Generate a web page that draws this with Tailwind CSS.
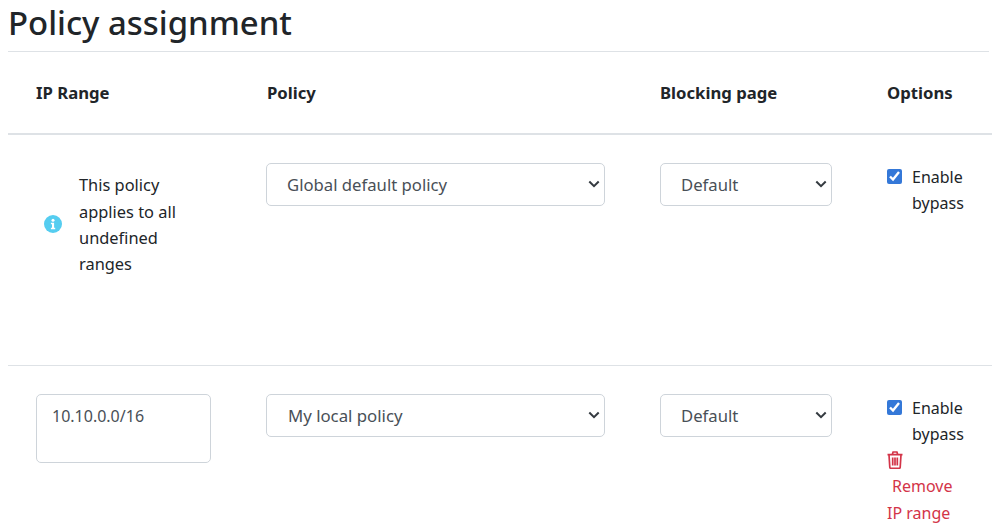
<!DOCTYPE html>
<html>
<head>
<meta charset="utf-8">
<script src="https://cdn.jsdelivr.net/npm/@tailwindcss/browser@4"></script>
</head>
<body class="bg-white text-[#212529] font-['Noto_Sans',sans-serif] text-[16px] h-[531px] overflow-hidden">
<div class="px-2">
  <h1 class="h-[51px] pt-px text-[32.9px] leading-[43px] font-medium">Policy assignment</h1>
  <div class="border-t border-[#dee2e6] grid grid-cols-[230px_394px_227px_133px]">
    <div class="col-span-4 grid grid-cols-subgrid border-b-2 border-[#dee2e6] h-[83px] pt-[29px] font-bold text-[16.7px] leading-6">
      <div class="pl-[28px]">IP Range</div>
      <div class="pl-[29px]">Policy</div>
      <div class="pl-[28px]">Blocking page</div>
      <div class="pl-[28px]">Options</div>
    </div>

    <div class="col-span-4 grid grid-cols-subgrid border-b border-[#dee2e6] h-[231px] pt-[28px]">
      <div class="pl-[36px] flex items-start">
        <div class="flex items-center gap-[17px] h-[122px]">
          <svg class="w-[18px] h-[18px] shrink-0" viewBox="0 0 18 18"><circle cx="9" cy="9" r="9" fill="#55cdf0"/><circle cx="9" cy="5.2" r="1.5" fill="#fff"/><path d="M6.9 7.7h3.2v5h1.1v1.5H6.9v-1.5H8v-3.5H6.9z" fill="#fff"/></svg>
          <div class="w-[110px] leading-[26.4px] text-[16.4px] pt-[2px]">This policy applies to all undefined ranges</div>
        </div>
      </div>
      <div class="pl-[28px]">
        <div class="relative w-[339px] h-[43px]">
          <select class="w-full h-full appearance-none bg-white border border-[#ced4da] rounded-[5px] pl-[20px] text-[#495057] text-[16.7px]"><option>Global default policy</option></select>
          <svg class="absolute right-[5px] top-[17px] w-[12px] h-[8px] pointer-events-none" viewBox="0 0 12 8"><path d="M1.3 1.5 6 6.2l4.7-4.7" fill="none" stroke="#343a40" stroke-width="2"/></svg>
        </div>
      </div>
      <div class="pl-[28px]">
        <div class="relative w-[172px] h-[43px]">
          <select class="w-full h-full appearance-none bg-white border border-[#ced4da] rounded-[5px] pl-[20px] text-[#495057] text-[16.7px]"><option>Default</option></select>
          <svg class="absolute right-[5px] top-[17px] w-[12px] h-[8px] pointer-events-none" viewBox="0 0 12 8"><path d="M1.3 1.5 6 6.2l4.7-4.7" fill="none" stroke="#343a40" stroke-width="2"/></svg>
        </div>
      </div>
      <div class="pl-[28px]">
        <label class="flex items-start gap-[10px] leading-[26.4px] pt-px">
          <input type="checkbox" checked class="w-[15px] h-[15px] mt-[5px] shrink-0 accent-[#3478d8]">
          <span>Enable<br>bypass</span>
        </label>
      </div>
    </div>

    <div class="col-span-4 grid grid-cols-subgrid pt-[28px]">
      <div class="pl-[28px]">
        <textarea class="block w-[175px] h-[69px] border border-[#ced4da] rounded-[5px] px-[15px] pt-[9px] text-[#495057] text-[16px] leading-6 resize-none">10.10.0.0/16</textarea>
      </div>
      <div class="pl-[28px]">
        <div class="relative w-[339px] h-[43px]">
          <select class="w-full h-full appearance-none bg-white border border-[#ced4da] rounded-[5px] pl-[21px] text-[#495057] text-[16.8px]"><option>My local policy</option></select>
          <svg class="absolute right-[5px] top-[17px] w-[12px] h-[8px] pointer-events-none" viewBox="0 0 12 8"><path d="M1.3 1.5 6 6.2l4.7-4.7" fill="none" stroke="#343a40" stroke-width="2"/></svg>
        </div>
      </div>
      <div class="pl-[28px]">
        <div class="relative w-[172px] h-[43px]">
          <select class="w-full h-full appearance-none bg-white border border-[#ced4da] rounded-[5px] pl-[20px] text-[#495057] text-[16.7px]"><option>Default</option></select>
          <svg class="absolute right-[5px] top-[17px] w-[12px] h-[8px] pointer-events-none" viewBox="0 0 12 8"><path d="M1.3 1.5 6 6.2l4.7-4.7" fill="none" stroke="#343a40" stroke-width="2"/></svg>
        </div>
      </div>
      <div class="pl-[28px] leading-[26.4px] pt-px">
        <label class="flex items-start gap-[10px]">
          <input type="checkbox" checked class="w-[15px] h-[15px] mt-[5px] shrink-0 accent-[#3478d8]">
          <span>Enable<br>bypass</span>
        </label>
        <div class="text-[#d33448]">
          <svg class="w-[16px] h-[18px] mt-[3px]" viewBox="0 0 16 18" fill="none" stroke="#d33448" stroke-width="1.7"><path d="M0.5 3.7h15M2 3.7l.8 12.6c0 .6.5 1 1 1h8.4c.5 0 1-.4 1-1L14 3.7M5.2 3.7l.9-2.7h3.8l.9 2.7M5.7 6.5v8M8 6.5v8M10.3 6.5v8"/></svg>
          <div class="pl-[5px] mt-[4px]">Remove</div>
          <div class="pt-px">IP range</div>
        </div>
      </div>
    </div>
  </div>
</div>
</body>
</html>
